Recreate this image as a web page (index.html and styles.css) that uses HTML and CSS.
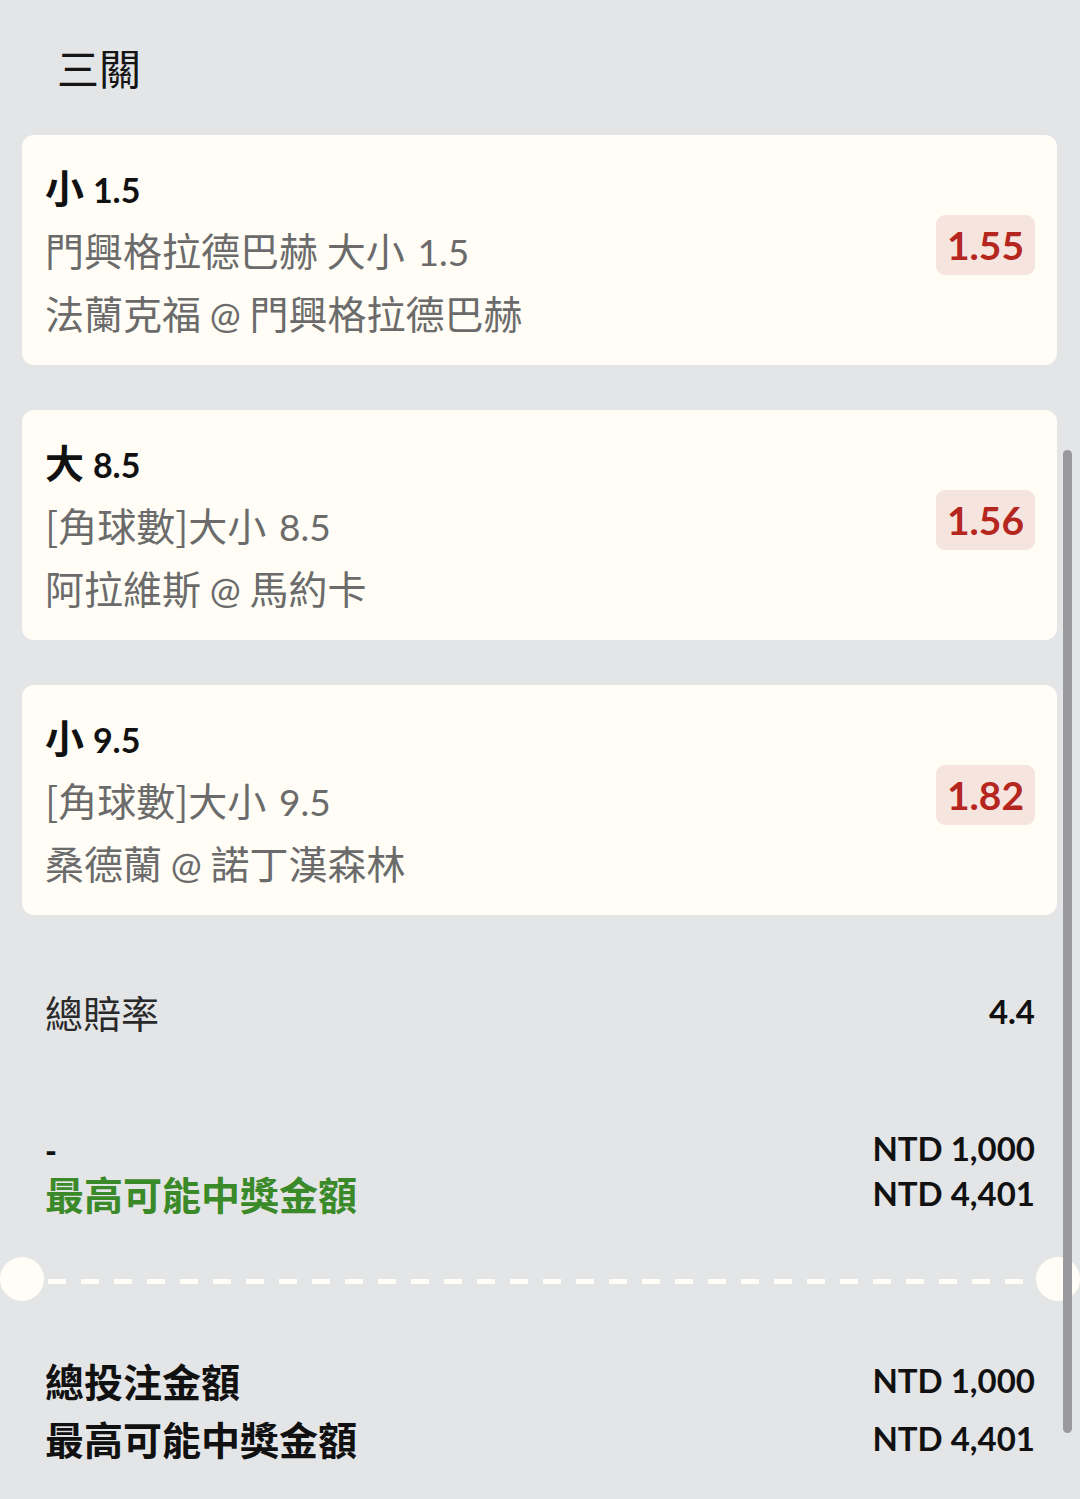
FILE: index.html
```html
<!DOCTYPE html>
<html lang="zh-Hant">
<head>
<meta charset="utf-8">
<title>三關</title>
<link rel="stylesheet" href="styles.css">
</head>
<body>
<main class="slip">
  <h1 class="title">三關</h1>

  <section class="leg">
    <div class="leg-info">
      <div class="leg-pick"><span class="cjk">小</span> <span class="num">1.5</span></div>
      <div class="leg-line">門興格拉德巴赫 大小 <span class="num">1.5</span></div>
      <div class="leg-line">法蘭克福 <span class="at">@</span> 門興格拉德巴赫</div>
    </div>
    <div class="odds">1.55</div>
  </section>

  <section class="leg">
    <div class="leg-info">
      <div class="leg-pick"><span class="cjk">大</span> <span class="num">8.5</span></div>
      <div class="leg-line">[角球數]大小 <span class="num">8.5</span></div>
      <div class="leg-line">阿拉維斯 <span class="at">@</span> 馬約卡</div>
    </div>
    <div class="odds">1.56</div>
  </section>

  <section class="leg">
    <div class="leg-info">
      <div class="leg-pick"><span class="cjk">小</span> <span class="num">9.5</span></div>
      <div class="leg-line">[角球數]大小 <span class="num">9.5</span></div>
      <div class="leg-line">桑德蘭 <span class="at">@</span> 諾丁漢森林</div>
    </div>
    <div class="odds">1.82</div>
  </section>

  <div class="row total-odds">
    <span class="label">總賠率</span>
    <span class="amount">4.4</span>
  </div>

  <div class="stake-block">
    <div class="row stake-row">
      <span class="dash-label">-</span>
      <span class="amount">NTD 1,000</span>
    </div>
    <div class="row stake-row">
      <span class="win-label">最高可能中獎金額</span>
      <span class="amount">NTD 4,401</span>
    </div>
  </div>

  <div class="divider">
    <span class="hole"></span>
    <span class="dashes"></span>
    <span class="hole"></span>
  </div>

  <div class="summary">
    <div class="row summary-row">
      <span class="sum-label">總投注金額</span>
      <span class="amount">NTD 1,000</span>
    </div>
    <div class="row summary-row">
      <span class="sum-label">最高可能中獎金額</span>
      <span class="amount">NTD 4,401</span>
    </div>
  </div>
</main>
<div class="scrollbar"></div>
</body>
</html>
```

FILE: styles.css
```css
html, body {
  margin: 0;
  padding: 0;
}

body {
  background: #e4e5e7;
  font-family: "Noto Sans CJK TC", "Lato", sans-serif;
  color: #111;
  width: 1080px;
  height: 1499px;
  overflow: hidden;
  position: relative;
}

.slip {
  padding: 37px 23px 0 22px;
  display: flex;
  flex-direction: column;
}

.title {
  margin: 0 0 38px 35px;
  font-size: 42px;
  font-weight: 400;
  line-height: 60px;
  color: #151515;
}

.leg {
  background: #fffdf5;
  border-radius: 12px;
  padding: 19px 22px 21px 23px;
  display: flex;
  justify-content: space-between;
  align-items: flex-start;
  margin-bottom: 45px;
}

.leg-info {
  display: flex;
  flex-direction: column;
}

.leg-pick {
  font-size: 39px;
  line-height: 64px;
  height: 64px;
  font-weight: 700;
  color: #111;
}

.leg-pick .num {
  font-family: "Lato", sans-serif;
  font-size: 34px;
  font-weight: 700;
}

.leg-line {
  font-size: 39px;
  line-height: 63px;
  height: 63px;
  color: #6b6b6b;
}

.leg-line .num {
  font-family: "Lato", sans-serif;
  font-size: 37px;
  margin-left: 4px;
}

.leg-line .at {
  font-family: "Lato", sans-serif;
  font-size: 37px;
}

.odds {
  margin-top: 61px;
  height: 60px;
  line-height: 60px;
  padding: 0 11px;
  border-radius: 9px;
  background: #f6e5df;
  color: #b5261e;
  font-family: "Lato", sans-serif;
  font-weight: 700;
  font-size: 39px;
}

.row {
  display: flex;
  justify-content: space-between;
  align-items: center;
  padding: 0 22px 0 23px;
}

.amount {
  font-family: "Lato", sans-serif;
  font-weight: 700;
  font-size: 33px;
  color: #111;
}

.total-odds {
  margin-top: 25px;
  height: 52px;
}

.total-odds .label {
  font-size: 38px;
  color: #2a2a2a;
}

.stake-block {
  margin-top: 89px;
  display: flex;
  flex-direction: column;
}

.stake-row {
  height: 45px;
  line-height: 45px;
}

.dash-label {
  font-family: "Lato", sans-serif;
  font-weight: 900;
  font-size: 32px;
  line-height: 45px;
  padding-top: 4px;
}

.win-label {
  font-size: 39px;
  font-weight: 700;
  line-height: 45px;
  color: #3b8a2a;
}

.divider {
  margin: 41px -23px 0 -22px;
  display: flex;
  align-items: center;
  height: 44px;
}

.hole {
  flex: none;
  width: 44px;
  height: 44px;
  border-radius: 50%;
  background: #fffdf5;
}

.dashes {
  flex: 1;
  height: 5px;
  margin: 4px 5px 0 4px;
  background: repeating-linear-gradient(to right, #fffdf5 0 18px, transparent 18px 33px);
}

.summary {
  margin-top: 50px;
  display: flex;
  flex-direction: column;
}

.summary-row {
  height: 58px;
}

.sum-label {
  font-size: 39px;
  font-weight: 700;
  color: #111;
}

.scrollbar {
  position: absolute;
  left: 1063px;
  top: 450px;
  width: 9px;
  height: 983px;
  border-radius: 5px;
  background: #9a9a9c;
}
```
